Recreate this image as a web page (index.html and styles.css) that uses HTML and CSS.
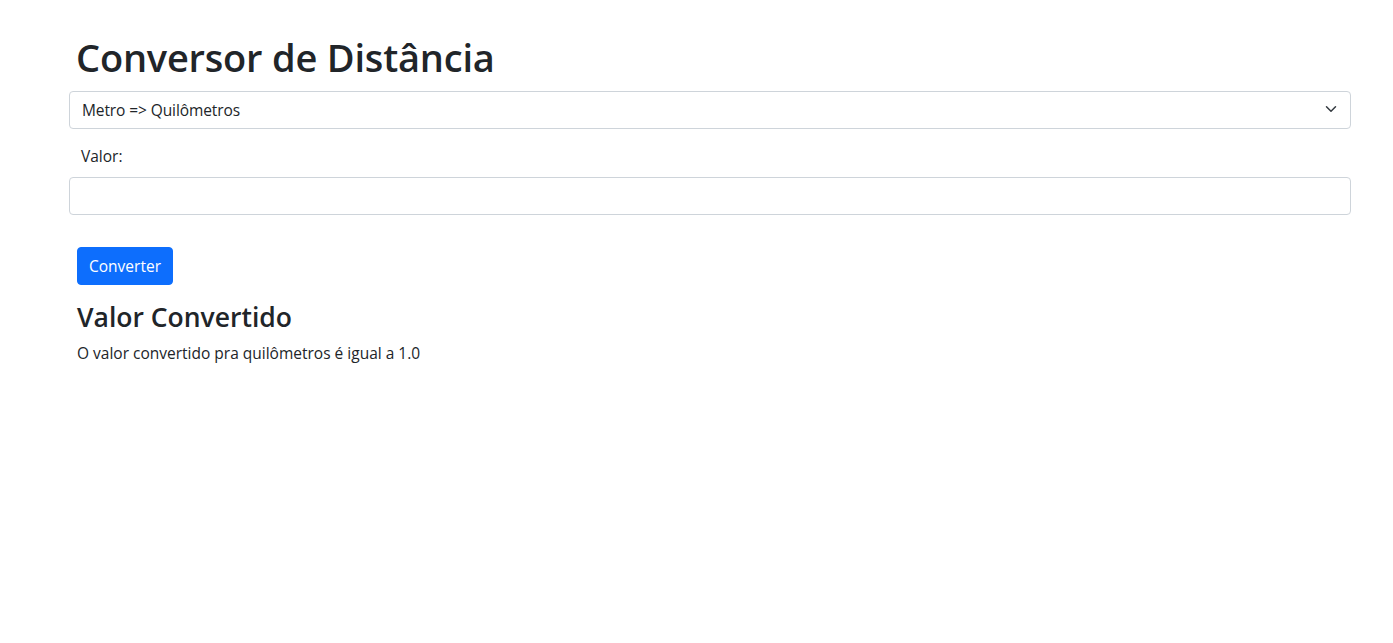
FILE: index.html
```html
<!DOCTYPE html>
<html lang="pt">
<head>
<meta charset="utf-8">
<title>Conversor de Distância</title>
<link rel="stylesheet" href="styles.css">
</head>
<body>
<main class="page">
  <h1 class="title">Conversor de Distância</h1>
  <div class="select-wrap">
    <select class="form-select">
      <option>Metro =&gt; Quilômetros</option>
    </select>
    <svg class="chevron" viewBox="0 0 16 16" width="12" height="12" aria-hidden="true"><path fill="none" stroke="#343a40" stroke-linecap="round" stroke-linejoin="round" stroke-width="2" d="m2 5 6 6 6-6"/></svg>
  </div>
  <label class="label" for="valor">Valor:</label>
  <input id="valor" class="form-control" type="text">
  <button class="btn">Converter</button>
  <h3 class="subtitle">Valor Convertido</h3>
  <p class="result">O valor convertido pra quilômetros é igual a 1.0</p>
</main>
</body>
</html>
```

FILE: styles.css
```css
* { box-sizing: border-box; }
html, body { margin: 0; padding: 0; background: #fff; }
body {
  font-family: "Open Sans", "Noto Sans", sans-serif;
  font-size: 15.5px;
  line-height: 24px;
  color: #212529;
}
.page {
  width: 1282px;
  margin-left: 69px;
  padding-top: 33px;
  display: flex;
  flex-direction: column;
  align-items: flex-start;
}
.title {
  margin: 0 0 10px 7px;
  font-size: 38px;
  font-weight: 600;
  line-height: 48px;
  letter-spacing: -0.2px;
}
.select-wrap {
  position: relative;
  width: 100%;
}
.form-select {
  display: block;
  width: 100%;
  height: 38px;
  padding: 6px 36px 6px 12px;
  font: inherit;
  letter-spacing: -0.1px;
  color: #212529;
  background: #fff;
  border: 1px solid #ced4da;
  border-radius: 4px;
  appearance: none;
  -webkit-appearance: none;
}
.chevron {
  position: absolute;
  right: 14px;
  top: 12px;
  pointer-events: none;
}
.label {
  margin: 15px 0 0 12px;
  line-height: 24px;
}
.form-control {
  display: block;
  width: 100%;
  height: 38px;
  margin-top: 9px;
  padding: 6px 12px;
  font: inherit;
  border: 1px solid #ced4da;
  border-radius: 4px;
  background: #fff;
}
.btn {
  margin: 32px 0 0 8px;
  width: 96px;
  height: 38px;
  padding: 6px 0;
  font: inherit;
  color: #fff;
  background: #0d6efd;
  border: 1px solid #0d6efd;
  border-radius: 4px;
}
.subtitle {
  margin: 14px 0 6px 8px;
  font-size: 26.5px;
  font-weight: 600;
  line-height: 36px;
}
.result {
  margin: 0 0 0 8px;
}
```
